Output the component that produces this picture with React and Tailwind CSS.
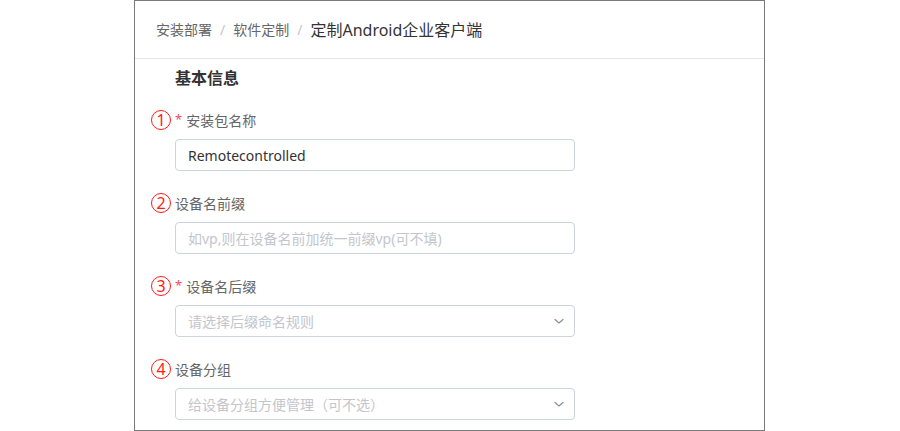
const fields = [
    { n: '1', label: '安装包名称', required: true, value: 'Remotecontrolled' },
    { n: '2', label: '设备名前缀', placeholder: '如vp,则在设备名前加统一前缀vp(可不填)' },
    { n: '3', label: '设备名后缀', required: true, placeholder: '请选择后缀命名规则', select: true },
    { n: '4', label: '设备分组', placeholder: '给设备分组方便管理（可不选）', select: true },
];

const Chevron = () => (
    <svg width="12" height="12" viewBox="0 0 12 12" fill="none">
        <path d="M2 4.5 L6 8 L10 4.5" stroke="#8a8f99" strokeWidth="1.2" strokeLinecap="round" strokeLinejoin="round" />
    </svg>
);

const App = () => {
    return (
        <div
            className="w-[900px] h-[431px] bg-white flex overflow-hidden"
            style={{ fontFamily: '"Noto Sans", "Noto Sans CJK SC", sans-serif' }}
        >
            <div className="ml-[134px] w-[631px] h-[431px] border border-[#7a7a7a] bg-white">
                {/* breadcrumb */}
                <div className="h-[58px] border-b border-[#e4e4e4] flex items-center pl-[21px]">
                    <span className="text-[14px] text-[#666]">安装部署</span>
                    <span className="text-[14px] text-[#c6c6c6] px-[8px]">/</span>
                    <span className="text-[14px] text-[#666]">软件定制</span>
                    <span className="text-[14px] text-[#c6c6c6] px-[8px]">/</span>
                    <span className="text-[16px] text-[#333]">定制Android企业客户端</span>
                </div>

                <div className="pl-[40px]">
                    <div className="mt-[9px] h-[20px] leading-[20px] text-[16px] font-bold text-[#333]">基本信息</div>

                    <div className="mt-[22px]">
                        {fields.map((f) => (
                            <div key={f.n} className="mb-[22px]">
                                <div className="relative h-[20px] flex items-center text-[14px] text-[#666]">
                                    <div className="absolute left-[-24px] top-[0px] w-[20px] h-[20px] rounded-full border border-[#ff1a1a] flex items-center justify-center text-[16px] leading-none text-[#ff1a1a]">
                                        {f.n}
                                    </div>
                                    {f.required && <span className="text-[#f04a6a] mr-[4px] text-[13px]">*</span>}
                                    <span>{f.label}</span>
                                </div>
                                <div className="mt-[9px] w-[400px] h-[32px] border border-[#cfd3da] rounded-[4px] flex items-center justify-between pl-[12px] pr-[9px] text-[14px]">
                                    {f.value ? (
                                        <span className="text-[#333]">{f.value}</span>
                                    ) : (
                                        <span className="text-[#c3c6cc]">{f.placeholder}</span>
                                    )}
                                    {f.select && <Chevron />}
                                </div>
                            </div>
                        ))}
                    </div>
                </div>
            </div>
        </div>
    );
};

export default App;
